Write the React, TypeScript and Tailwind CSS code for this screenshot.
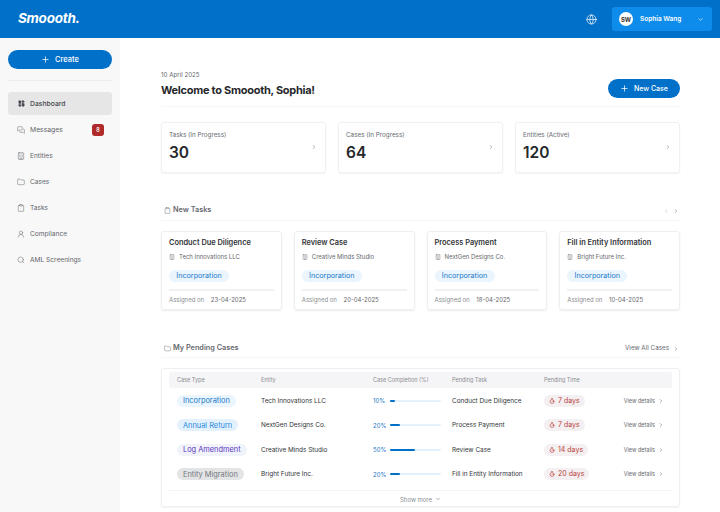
import React from 'react';
import {
  Building,
  ChevronDown,
  ChevronLeft,
  ChevronRight,
  Folder,
  Clipboard,
  Globe,
  LayoutDashboard,
  MessagesSquare,
  Plus,
  Search,
  Timer,
  UserRound,
} from 'lucide-react';

const navItems = [
  { label: 'Entities', icon: Building },
  { label: 'Cases', icon: Folder },
  { label: 'Tasks', icon: Clipboard },
  { label: 'Compliance', icon: UserRound },
  { label: 'AML Screenings', icon: Search },
];

const stats = [
  { label: 'Tasks (In Progress)', value: '30' },
  { label: 'Cases (In Progress)', value: '64' },
  { label: 'Entities (Active)', value: '120' },
];

const tasks = [
  { title: 'Conduct Due Diligence', entity: 'Tech Innovations LLC', date: '23-04-2025' },
  { title: 'Review Case', entity: 'Creative Minds Studio', date: '20-04-2025' },
  { title: 'Process Payment', entity: 'NextGen Designs Co.', date: '18-04-2025' },
  { title: 'Fill in Entity Information', entity: 'Bright Future Inc.', date: '10-04-2025' },
];

const cases = [
  {
    type: 'Incorporation',
    pill: 'bg-[#eaf5fe] text-[#1a78c8]',
    entity: 'Tech Innovations LLC',
    pct: 10,
    bar: 'w-[5px]',
    task: 'Conduct Due Diligence',
    days: '7 days',
  },
  {
    type: 'Annual Return',
    pill: 'bg-[#e3f1fd] text-[#2a8ae0]',
    entity: 'NextGen Designs Co.',
    pct: 20,
    bar: 'w-[10px]',
    task: 'Process Payment',
    days: '7 days',
  },
  {
    type: 'Log Amendment',
    pill: 'bg-[#f1f3fb] text-[#5a35c0]',
    entity: 'Creative Minds Studio',
    pct: 50,
    bar: 'w-[25px]',
    task: 'Review Case',
    days: '14 days',
  },
  {
    type: 'Entity Migration',
    pill: 'bg-[#e3e4e6] text-[#74777c]',
    entity: 'Bright Future Inc.',
    pct: 20,
    bar: 'w-[10px]',
    task: 'Fill in Entity Information',
    days: '20 days',
  },
];

const App: React.FC = () => {
  return (
    <div className="h-screen w-full overflow-hidden bg-white font-['Inter',sans-serif] text-[#2b2b2b]">
      {/* Top bar */}
      <header className="flex h-[38px] items-center justify-between bg-[#0070c9] pl-[18px] pr-2">
        <span className="text-[13.5px] font-bold italic leading-none tracking-[-0.02em] text-white">Smoooth.</span>
        <div className="flex items-center gap-[15px]">
          <Globe className="h-[11px] w-[11px] text-white" strokeWidth={1.5} />
          <button className="flex h-6 w-[100px] items-center rounded-[3px] bg-[#0d8cec] pl-[7px] pr-2">
            <span className="flex h-[14px] w-[14px] items-center justify-center rounded-full bg-white text-[6px] font-bold text-[#333]">
              SW
            </span>
            <span className="ml-[7px] pt-[1px] text-[6.5px] font-semibold text-white">Sophia Wang</span>
            <ChevronDown className="ml-auto h-[7px] w-[7px] text-white" />
          </button>
        </div>
      </header>

      <div className="flex h-[474px]">
        {/* Sidebar */}
        <aside className="w-[120px] shrink-0 bg-[#f8f8f9] px-2 pt-3">
          <button className="flex h-[19px] w-full items-center justify-center gap-[5px] rounded-full bg-[#0070c9] text-[7.5px] font-medium text-white">
            <Plus className="h-[9px] w-[9px]" />
            Create
          </button>
          <div className="mt-[11px] h-px bg-[#ececef]" />
          <nav className="mt-[11px] text-[#63666b]">
            <div className="flex h-[23px] items-center gap-[5px] rounded-[3px] bg-[#e6e6e7] px-[10px] text-[6.8px] font-medium text-[#45484d]">
              <LayoutDashboard className="h-[7px] w-[7px] fill-[#45484d]" />
              <span className="pt-[1px]">Dashboard</span>
            </div>
            <div className="mt-[2px] flex h-[26px] items-center gap-[5px] pl-[9px] pr-2 text-[6.8px]">
              <MessagesSquare className="h-[8px] w-[8px]" strokeWidth={1.5} />
              Messages
              <span className="ml-auto flex h-3 w-3 items-center justify-center rounded-[3px] bg-[#b02a2a] text-[5.5px] font-semibold text-white">
                8
              </span>
            </div>
            {navItems.map((item) => (
              <div key={item.label} className="flex h-[26px] items-center gap-[5px] pl-[9px] text-[6.6px]">
                <item.icon className="h-[8px] w-[8px]" strokeWidth={1.5} />
                <span className="pt-[2px]">{item.label}</span>
              </div>
            ))}
          </nav>
        </aside>

        {/* Main content */}
        <main className="min-w-0 flex-1 pl-[41px] pr-10 pt-[33px]">
          <div className="flex items-start justify-between border-b border-[#f7f7f8] pb-[7px]">
            <div>
              <p className="text-[6.2px] leading-[8px] text-[#66696e]">10 April 2025</p>
              <h1 className="mt-[2px] text-[11px] font-bold leading-[18px] tracking-[-0.025em] text-[#26282b]">
                Welcome to Smoooth, Sophia!
              </h1>
            </div>
            <button className="mt-[8px] flex h-[19px] w-[72px] items-center justify-center gap-[5px] rounded-full bg-[#0070c9] text-[7px] font-medium text-white">
              <Plus className="h-[9px] w-[9px]" />
              <span className="pt-[1px]">New Case</span>
            </button>
          </div>

          <section className="mt-[15px] grid grid-cols-3 gap-3">
            {stats.map((stat) => (
              <div
                key={stat.label}
                className="flex h-[51px] items-center justify-between rounded-[3px] border border-[#f0f0f2] pl-[7px] pr-2 shadow-[0_1px_2px_rgba(0,0,0,0.05)]"
              >
                <div className="pb-[1px]">
                  <p className="text-[6.3px] leading-[8px] text-[#66696e]">{stat.label}</p>
                  <p className="mt-[4px] text-[15.5px] font-semibold leading-[20px] text-[#26282b]">{stat.value}</p>
                </div>
                <ChevronRight className="mb-[2px] h-[6px] w-[6px] text-[#66696e]" />
              </div>
            ))}
          </section>

          <section className="mt-[32px]">
            <div className="flex h-[16px] items-center justify-between border-b border-[#f7f7f8] pb-[4px] pr-[1px]">
              <div className="flex items-center gap-[2px] pl-[3px] text-[7.3px] font-semibold text-[#66696e]">
                <Clipboard className="h-[7px] w-[7px]" strokeWidth={1.5} />
                New Tasks
              </div>
              <div className="flex items-center gap-[4px] text-[#66696e]">
                <ChevronLeft className="h-[6px] w-[6px] text-[#b5b7ba]" />
                <ChevronRight className="h-[6px] w-[6px]" />
              </div>
            </div>
            <div className="mt-[10px] grid grid-cols-4 gap-3">
              {tasks.map((task) => (
                <div
                  key={task.title}
                  className="h-[79px] rounded-[3px] border border-[#efeff1] px-[7px] pt-[6px] shadow-[0_1px_2px_rgba(0,0,0,0.08)]"
                >
                  <p className="whitespace-nowrap text-[7.4px] font-semibold leading-[10px] text-[#333538]">{task.title}</p>
                  <div className="mt-[4px] flex items-center gap-[4px] text-[6px] leading-[10px] text-[#66696e]">
                    <Building className="h-[6px] w-[6px]" strokeWidth={1.5} />
                    {task.entity}
                  </div>
                  <span className="mt-[8px] flex h-3 w-[60px] items-center justify-center rounded-full bg-[#eaf5fe] text-[7.2px] text-[#1a78c8]">
                    Incorporation
                  </span>
                  <div className="mt-[7px] h-[2px] bg-[#f1f1f3]" />
                  <p className="mt-[5px] whitespace-nowrap text-[6px] leading-[8px] text-[#8b8e92]">
                    Assigned on <span className="ml-[5px] text-[#66696e]">{task.date}</span>
                  </p>
                </div>
              ))}
            </div>
          </section>

          <section className="mt-[32px]">
            <div className="flex h-[16px] items-center justify-between border-b border-[#f7f7f8] pb-[2px]">
              <div className="flex items-center gap-[2px] pl-[3px] text-[7.3px] font-semibold text-[#66696e]">
                <Folder className="h-[7px] w-[7px]" strokeWidth={1.5} />
                My Pending Cases
              </div>
              <div className="flex items-center gap-[4px] pr-[1px] text-[6.3px] text-[#66696e]">
                View All Cases
                <ChevronRight className="h-[6px] w-[6px]" />
              </div>
            </div>

            <div className="mt-[10px] h-[139px] rounded-[3px] border border-[#efeff1] px-[7px] pt-[3px] shadow-[0_1px_2px_rgba(0,0,0,0.05)]">
              <div className="grid h-4 grid-cols-[84px_112px_79px_92px_1fr] items-center rounded-[3px] bg-[#f5f5f7] pl-2 text-[5.5px] text-[#8b8e92]">
                <span>Case Type</span>
                <span>Entity</span>
                <span>Case Completion (%)</span>
                <span>Pending Task</span>
                <span>Pending Time</span>
              </div>
              {cases.map((row) => (
                <div
                  key={row.type}
                  className="grid h-[24.5px] grid-cols-[84px_112px_79px_92px_1fr] items-center pl-2 pt-[1px] text-[6.4px] text-[#333538]"
                >
                  <span>
                    <span className={`flex h-3 w-fit items-center whitespace-nowrap rounded-full px-[6px] text-[7.4px] ${row.pill}`}>
                      {row.type}
                    </span>
                  </span>
                  <span className="pt-[2px]">{row.entity}</span>
                  <span className="flex items-center pr-[11px]">
                    <span className="w-[17px] text-[6px] text-[#1a78c8]">{row.pct}%</span>
                    <span className="h-[2px] flex-1 rounded-full bg-[#e3f1fd]">
                      <span className={`block h-[2px] rounded-full bg-[#0070c9] ${row.bar}`} />
                    </span>
                  </span>
                  <span className="pt-[2px]">{row.task}</span>
                  <span className="flex items-center justify-between pr-2">
                    <span className="flex h-3 items-center gap-[3px] rounded-full bg-[#f4eff0] px-[5px] text-[7px] text-[#b8433f]">
                      <Timer className="h-[6px] w-[6px]" strokeWidth={2.5} />
                      {row.days}
                    </span>
                    <span className="flex items-center gap-[3px] text-[5.5px] text-[#66696e]">
                      View details
                      <ChevronRight className="h-[6px] w-[6px]" />
                    </span>
                  </span>
                </div>
              ))}
              <div className="mt-[4px] flex h-[16px] items-center justify-center gap-[3px] border-t border-[#f3f3f5] pt-[1px] text-[6px] text-[#8b8e92]">
                Show more
                <ChevronDown className="h-[6px] w-[6px] text-[#66696e]" />
              </div>
            </div>
          </section>
        </main>
      </div>
    </div>
  );
};

export default App;
